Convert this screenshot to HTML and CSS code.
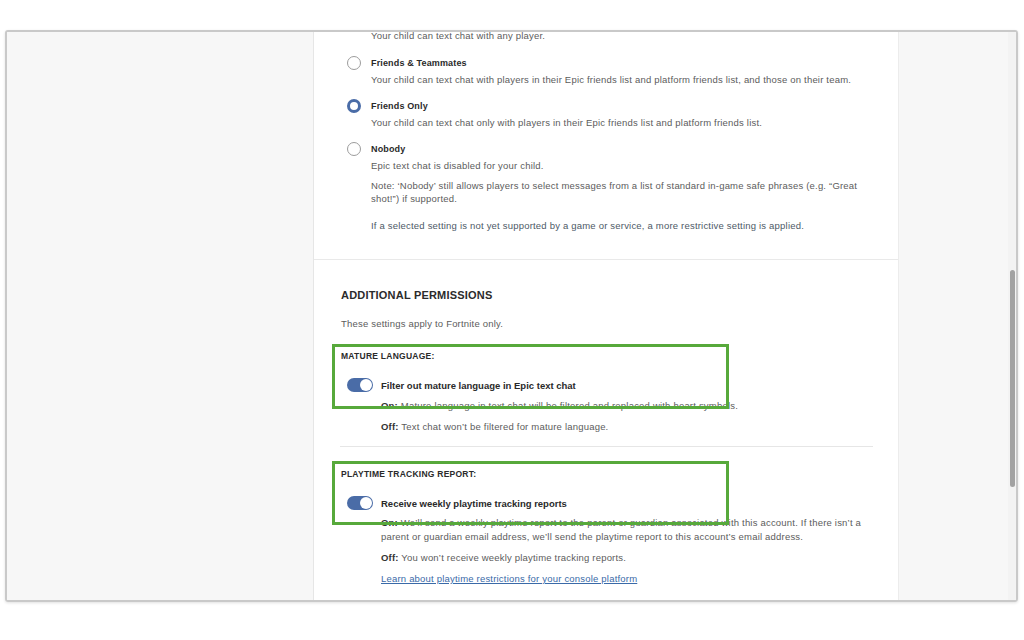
FILE: index.html
```html
<!DOCTYPE html>
<html lang="en">
<head>
    <meta charset="UTF-8">
    <meta name="viewport" content="width=device-width, initial-scale=1.0">
    <title>Parental Controls</title>
    <link rel="stylesheet" href="styles.css">
</head>
<body>
    <div class="window">
        <div class="gutter"></div>

        <main class="panel">
            <section class="chat-options">
                <p class="desc first">Your child can text chat with any player.</p>

                <div class="option">
                    <span class="radio"></span>
                    <div class="option-body">
                        <div class="option-title">Friends &amp; Teammates</div>
                        <p class="desc">Your child can text chat with players in their Epic friends list and platform friends list, and those on their team.</p>
                    </div>
                </div>

                <div class="option">
                    <span class="radio checked"></span>
                    <div class="option-body">
                        <div class="option-title">Friends Only</div>
                        <p class="desc">Your child can text chat only with players in their Epic friends list and platform friends list.</p>
                    </div>
                </div>

                <div class="option">
                    <span class="radio"></span>
                    <div class="option-body">
                        <div class="option-title">Nobody</div>
                        <p class="desc">Epic text chat is disabled for your child.</p>
                        <p class="desc note">Note: ‘Nobody’ still allows players to select messages from a list of standard in-game safe phrases (e.g. “Great shot!”) if supported.</p>
                        <p class="desc rule">If a selected setting is not yet supported by a game or service, a more restrictive setting is applied.</p>
                    </div>
                </div>
            </section>

            <section class="permissions">
                <h2>Additional Permissions</h2>
                <p class="desc intro">These settings apply to Fortnite only.</p>

                <div class="group">
                    <div class="highlight"></div>
                    <h3>Mature Language:</h3>
                    <div class="toggle-row">
                        <span class="toggle"><span class="knob"></span></span>
                        <span class="toggle-label">Filter out mature language in Epic text chat</span>
                    </div>
                    <div class="toggle-info">
                        <p class="desc"><b>On:</b> Mature language in text chat will be filtered and replaced with heart symbols.</p>
                        <p class="desc off"><b>Off:</b> Text chat won’t be filtered for mature language.</p>
                    </div>
                </div>

                <hr class="sep">

                <div class="group">
                    <div class="highlight playtime"></div>
                    <h3>Playtime Tracking Report:</h3>
                    <div class="toggle-row">
                        <span class="toggle"><span class="knob"></span></span>
                        <span class="toggle-label">Receive weekly playtime tracking reports</span>
                    </div>
                    <div class="toggle-info">
                        <p class="desc tall"><b>On:</b> We’ll send a weekly playtime report to the parent or guardian associated with this account. If there isn’t a parent or guardian email address, we’ll send the playtime report to this account’s email address.</p>
                        <p class="desc off"><b>Off:</b> You won’t receive weekly playtime tracking reports.</p>
                        <a class="desc link" href="#">Learn about playtime restrictions for your console platform</a>
                    </div>
                </div>
            </section>
        </main>

        <div class="gutter right"></div>
        <div class="scrollbar"><div class="thumb"></div></div>
    </div>
</body>
</html>
```

FILE: styles.css
```css
body {
    margin: 0;
    background-color: #ffffff;
    font-family: "Liberation Sans", Arial, sans-serif;
    color: #333;
    height: 640px;
    overflow: hidden;
}

p {
    margin: 0;
}

.window {
    margin: 30px 0 0 5px;
    width: 1013px;
    height: 572px;
    box-sizing: border-box;
    border: 2px solid #c9c9c9;
    border-radius: 3px;
    box-shadow: 0 1px 3px rgba(0, 0, 0, 0.12);
    display: flex;
    overflow: hidden;
}

.gutter {
    width: 306px;
    background-color: #f7f7f7;
    border-right: 1px solid #e6e6e6;
}

.gutter.right {
    width: 109px;
    border-right: none;
    border-left: 1px solid #ececec;
}

.panel {
    width: 584px;
    background-color: #ffffff;
    overflow: hidden;
}

.scrollbar {
    width: 8px;
    background-color: #f3f3f3;
}

.thumb {
    margin: 238px 0 0 2px;
    width: 5px;
    height: 217px;
    background-color: #a2a2a2;
    border-radius: 3px;
}

/* text styles */
.desc {
    font-size: 9.5px;
    line-height: 13px;
    letter-spacing: 0.2px;
    color: #5c5c5c;
    white-space: nowrap;
}

.desc b {
    color: #333;
}

/* chat options */
.chat-options {
    padding: 0 20px 27px 33px;
    border-bottom: 1px solid #e9e9e9;
}

.desc.first {
    margin: -3px 0 13px 24px;
}

.option {
    display: flex;
    gap: 10px;
    margin-bottom: 12px;
}

.option:last-child {
    margin-bottom: 0;
}

.radio {
    flex: none;
    width: 14px;
    height: 14px;
    margin-top: 1px;
    box-sizing: border-box;
    border: 1px solid #9c9c9c;
    border-radius: 50%;
    background-color: #fff;
}

.radio.checked {
    border: 3.5px solid #4a6ca7;
}

.option-title {
    font-size: 9px;
    line-height: 16px;
    letter-spacing: 0.15px;
    font-weight: bold;
    color: #2a2a2a;
}

.option-body .desc {
    margin-top: 2px;
}

.option-body .note {
    margin-top: 7px;
    white-space: normal;
    width: 492px;
}

.option-body .rule {
    margin-top: 14px;
    color: #4d5966;
}

/* additional permissions */
.permissions {
    padding: 27px 25px 0 27px;
}

h2 {
    margin: 0;
    font-size: 11px;
    line-height: 16px;
    letter-spacing: 0.2px;
    font-weight: bold;
    text-transform: uppercase;
    color: #2b2b2b;
}

.desc.intro {
    margin-top: 14px;
}

.group {
    position: relative;
    margin-top: 20px;
}

h3 {
    margin: 0;
    font-size: 8.5px;
    line-height: 13px;
    letter-spacing: 0.25px;
    font-weight: bold;
    text-transform: uppercase;
    color: #2b2b2b;
}

/* the green call-out boxes sit over the rows */
.highlight {
    position: absolute;
    top: -6px;
    left: -9px;
    width: 397px;
    height: 65px;
    box-sizing: border-box;
    border: 3px solid #57a93b;
    z-index: 2;
    pointer-events: none;
}

.highlight.playtime {
    top: -7px;
    height: 64px;
}

.toggle-row {
    display: flex;
    align-items: center;
    gap: 8px;
    height: 16px;
    margin-top: 14px;
    padding-left: 6px;
}

.toggle {
    flex: none;
    width: 26px;
    height: 14px;
    box-sizing: border-box;
    padding: 1px;
    border-radius: 7px;
    background-color: #4a6ca7;
    display: flex;
    justify-content: flex-end;
    align-items: center;
}

.knob {
    width: 12px;
    height: 12px;
    border-radius: 50%;
    background-color: #ffffff;
}

.toggle-label {
    font-size: 9.5px;
    font-weight: bold;
    color: #2a2a2a;
}

.toggle-info {
    margin: 6px 0 0 40px;
}

.toggle-info .off {
    margin-top: 8px;
}

.desc.tall {
    line-height: 14px;
    white-space: normal;
    width: 486px;
    margin-top: -1px;
}

.desc.tall + .off {
    margin-top: 7px;
}

.link {
    display: block;
    margin-top: 8px;
    color: #3a6aa8;
    text-decoration: underline;
}

.sep {
    margin: 13px 0 21px -1px;
    border: none;
    border-top: 1px solid #e6e6e6;
    height: 0;
}
```
